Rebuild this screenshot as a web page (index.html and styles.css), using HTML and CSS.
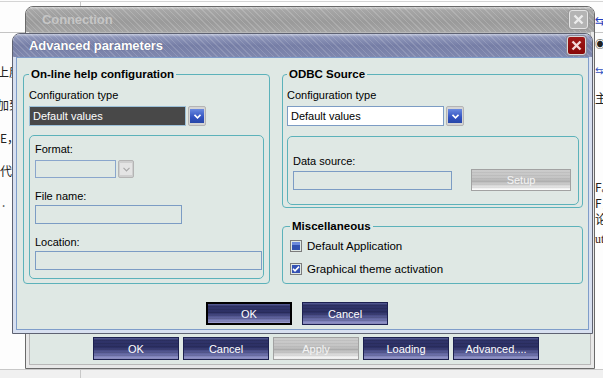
FILE: index.html
```html
<!DOCTYPE html>
<html lang="en">
<head>
  <meta charset="UTF-8">
  <title>Advanced parameters</title>
  <link rel="stylesheet" href="styles.css">
</head>
<body>

<div class="page">
  <div class="tabs"><span class="tab"></span></div>
  <div class="header">
    <span class="edge-icon">&#x21C6;</span>
  </div>
  <div class="content">
    <div class="edge left">
      <div class="line cut">上度</div>
      <div class="line cut">加到</div>
      <div class="line">E，</div>
      <div class="line">代码</div>
      <div class="line mono">. P</div>
    </div>
    <div class="edge right">
      <div class="line dot">&#x25C9;</div>
      <div class="line blue">&#x21C6;</div>
      <div class="line">主</div>
      <div class="line low">F。</div>
      <div class="line tight">F，</div>
      <div class="line tight">论</div>
      <div class="line brown">ut</div>
    </div>
  </div>
  <div class="status"><span class="status-cell"></span></div>
</div>

<!-- back window -->
<div class="win conn">
  <div class="titlebar">
    <span class="title">Connection</span>
    <span class="close">
      <svg width="11" height="11" viewBox="0 0 11 11"><path d="M1.5 1.5 L9.5 9.5 M9.5 1.5 L1.5 9.5" stroke="#ececec" stroke-width="2.4"/></svg>
    </span>
  </div>
  <div class="frame">
    <div class="win-body conn-body">
      <div class="btn-row conn-buttons">
        <button class="btn">OK</button>
        <button class="btn">Cancel</button>
        <button class="btn gray">Apply</button>
        <button class="btn">Loading</button>
        <button class="btn">Advanced....</button>
      </div>
    </div>
  </div>
</div>

<!-- front dialog -->
<div class="win adv">
  <div class="titlebar">
    <span class="title">Advanced parameters</span>
    <span class="close">
      <svg width="11" height="11" viewBox="0 0 11 11"><path d="M1.5 1.5 L9.5 9.5 M9.5 1.5 L1.5 9.5" stroke="#f4d8d8" stroke-width="2.4"/></svg>
    </span>
  </div>
  <div class="frame">
    <div class="win-body adv-body">
      <div class="columns">

        <fieldset class="group help">
          <legend>On-line help configuration</legend>
          <label class="lbl first">Configuration type</label>
          <div class="combo">
            <div class="select dark">Default values</div>
            <span class="drop"><span class="drop-in">
              <svg width="7" height="5" viewBox="0 0 7 5"><path d="M0.5 0.8 L3.5 3.8 L6.5 0.8" stroke="#fff" stroke-width="1.6" fill="none"/></svg>
            </span></span>
          </div>

          <fieldset class="group inner help-inner">
            <label class="lbl format">Format:</label>
            <div class="combo small">
              <div class="select blank"></div>
              <span class="drop off"><span class="drop-in">
                <svg width="7" height="5" viewBox="0 0 7 5"><path d="M0.5 0.8 L3.5 3.8 L6.5 0.8" stroke="#a8a8a8" stroke-width="1.2" fill="none"/></svg>
              </span></span>
            </div>
            <label class="lbl">File name:</label>
            <div class="input file"></div>
            <label class="lbl">Location:</label>
            <div class="input location"></div>
          </fieldset>
        </fieldset>

        <div class="right-col">
          <fieldset class="group odbc">
            <legend>ODBC Source</legend>
            <label class="lbl first">Configuration type</label>
            <div class="combo">
              <div class="select light">Default values</div>
              <span class="drop"><span class="drop-in">
                <svg width="7" height="5" viewBox="0 0 7 5"><path d="M0.5 0.8 L3.5 3.8 L6.5 0.8" stroke="#fff" stroke-width="1.6" fill="none"/></svg>
              </span></span>
            </div>
            <fieldset class="group inner odbc-inner">
              <label class="lbl source">Data source:</label>
              <div class="source-row">
                <div class="input source"></div>
                <button class="btn gray setup">Setup</button>
              </div>
            </fieldset>
          </fieldset>

          <fieldset class="group misc">
            <legend>Miscellaneous</legend>
            <div class="check">
              <svg width="12" height="12" viewBox="0 0 12 12">
                <rect x="0.5" y="0.5" width="11" height="11" fill="#dfe8e4" stroke="#7c7c7c"/>
                <rect x="2" y="2" width="8" height="8" fill="#3050b0"/>
                <rect x="2" y="2" width="8" height="3" fill="#6a88dc"/>
              </svg>
              <span>Default Application</span>
            </div>
            <div class="check">
              <svg width="12" height="12" viewBox="0 0 12 12">
                <rect x="0.5" y="0.5" width="11" height="11" fill="#dfe8e4" stroke="#7c7c7c"/>
                <rect x="2" y="2" width="8" height="8" fill="#3452b4"/>
                <path d="M3 5.8 L5 7.8 L9 3.6" stroke="#fff" stroke-width="1.6" fill="none"/>
              </svg>
              <span>Graphical theme activation</span>
            </div>
          </fieldset>
        </div>

      </div>
      <div class="btn-row adv-buttons">
        <button class="btn focus">OK</button>
        <button class="btn">Cancel</button>
      </div>
    </div>
  </div>
</div>

</body>
</html>
```

FILE: styles.css
```css
body {
  margin: 0;
  width: 603px;
  height: 378px;
  overflow: hidden;
  position: relative;
  font-family: "Liberation Sans", Arial, sans-serif;
  font-size: 11px;
  background: #fdfdfd;
}

/* page behind the windows */
.page {
  height: 378px;
  display: flex;
  flex-direction: column;
}

.tabs {
  height: 8px;
  border-top: 1px solid #d4d4d4;
  margin-top: 1px;
}

.tab {
  display: block;
  width: 80px;
  height: 8px;
  border-right: 1px solid #c8c8c8;
}

.header {
  height: 22px;
  border-bottom: 1px solid #c4c4c4;
  display: flex;
  justify-content: flex-end;
  align-items: center;
}

.edge-icon {
  width: 8px;
  overflow: hidden;
  color: #2040c0;
  font-size: 12px;
  font-family: "DejaVu Sans", sans-serif;
}

.content {
  flex: 1;
  display: flex;
  justify-content: space-between;
}

.edge {
  width: 12px;
  overflow: hidden;
  white-space: nowrap;
  font-family: "Noto Sans CJK SC", sans-serif;
  font-size: 12px;
  color: #222;
}

.edge.left {
  padding-top: 31px;
}

.edge.left .line {
  height: 33px;
  line-height: 16px;
}

.edge.left .cut {
  text-indent: -3px;
}

.edge.left .mono {
  font-family: "Liberation Mono", monospace;
  color: #666;
  font-size: 12px;
}

.edge.right {
  width: 8px;
  padding-top: 3px;
}

.edge.right .line {
  height: 27px;
  line-height: 16px;
}

.edge.right .dot {
  font-size: 10px;
}

.edge.right .blue {
  color: #3050c0;
  font-family: "DejaVu Sans", sans-serif;
  font-size: 10px;
}

.edge.right .low {
  margin-top: 62px;
  height: 16px;
  line-height: 16px;
}

.edge.right .tight {
  height: 16px;
  line-height: 16px;
}

.edge.right .brown {
  margin-top: 4px;
  color: #402010;
  font-family: "Liberation Serif", serif;
}

.status {
  height: 8px;
  border-top: 1px solid #c8c8c8;
  background: #f0f0f0;
}

.status-cell {
  display: block;
  width: 80px;
  height: 8px;
  border-right: 1px solid #c8c8c8;
}

/* windows */
.win {
  position: absolute;
  box-sizing: border-box;
  display: flex;
  flex-direction: column;
  border: 1px solid #5e6272;
  border-radius: 8px 8px 0 0;
  overflow: hidden;
}

.conn {
  left: 25px;
  top: 6px;
  width: 570px;
  height: 363px;
  border-color: #6a6a6a;
}

.adv {
  left: 12px;
  top: 33px;
  width: 581px;
  height: 301px;
}

.titlebar {
  height: 23px;
  display: flex;
  align-items: center;
  justify-content: space-between;
  padding: 0 6px 0 16px;
  flex-shrink: 0;
}

.conn .titlebar {
  height: 25px;
  background:
    repeating-linear-gradient(45deg, rgba(255,255,255,0.16) 0 1px, transparent 1px 4px),
    linear-gradient(#d4d4d4 0, #a6a6a6 3px, #9a9a9a 60%, #a4a4a4 100%);
}

.adv .titlebar {
  background:
    repeating-linear-gradient(45deg, rgba(255,255,255,0.14) 0 1px, transparent 1px 4px),
    linear-gradient(#c4cade 0, #8e96ba 3px, #767ea6 50%, #8088ae 100%);
}

.title {
  font-size: 13px;
  font-weight: bold;
  letter-spacing: -0.1px;
}

.conn .title {
  color: #c6c6c6;
}

.adv .title {
  color: #fff;
  text-shadow: 0 0 1px #505878;
}

.close {
  width: 19px;
  height: 19px;
  box-sizing: border-box;
  border-radius: 3px;
  display: flex;
  align-items: center;
  justify-content: center;
}

.conn .close {
  background: #b4b4b4;
  border: 1px solid #e4e4e4;
  box-shadow: 0 0 0 1px #9a9a9a;
}

.adv .close {
  background: linear-gradient(#a01818, #880808);
  border: 1px solid #d8d8d8;
  box-shadow: 0 0 0 1px #8a8a98;
}

.frame {
  flex: 1;
  display: flex;
  padding: 0 3px 3px;
}

.conn .frame {
  background: #e8e8e8;
}

.adv .frame {
  background: #d8e0f0;
}

.win-body {
  flex: 1;
  border: 1px solid #7f9dca;
  background: #dfe8e4;
}

.conn-body {
  border-color: #b8b8b8;
  display: flex;
  flex-direction: column;
  justify-content: flex-end;
  padding: 0 0 4px 63px;
}

.adv-body {
  padding: 9px 5px 0 6px;
}

.columns {
  display: flex;
  gap: 12px;
  align-items: flex-start;
}

/* group boxes */
.group {
  margin: 0;
  border: 1px solid #5cb2ba;
  border-radius: 4px;
  min-width: 0;
}

.group legend {
  padding: 0 2px;
  font-size: 11.5px;
  font-weight: bold;
  line-height: 14px;
  color: #000;
}

.help {
  width: 247px;
  box-sizing: border-box;
  padding: 0 5px 4px;
}

.right-col {
  width: 301px;
  display: flex;
  flex-direction: column;
  gap: 11px;
}

.odbc {
  padding: 0 3px 2px 4px;
}

.misc {
  padding: 1px 5px 3px 7px;
}

.inner {
  padding: 0 5px 8px;
  border-radius: 5px;
}

.help-inner {
  margin-top: 9px;
}

.odbc-inner {
  margin-top: 10px;
  padding-bottom: 13px;
}

.lbl {
  display: block;
  line-height: 13px;
  color: #000;
  margin: 12px 0 2px;
}

.lbl.first {
  margin: 8px 0 4px;
}

.lbl.format {
  margin: 7px 0 4px;
}

.lbl.source {
  margin: 18px 0 1px;
}

/* combos and inputs */
.combo {
  display: flex;
  gap: 2px;
  height: 20px;
}

.select {
  box-sizing: border-box;
  width: 157px;
  height: 20px;
  line-height: 18px;
  padding: 0 3px;
  font-size: 11px;
}

.select.dark {
  background: #484848;
  color: #fff;
  border: 1px solid #9cc0d8;
}

.select.light {
  background: #fff;
  color: #000;
  border: 1px solid #7c9cc4;
}

.drop {
  box-sizing: border-box;
  width: 18px;
  height: 20px;
  background: #d4d4d4;
  border: 1px solid #b4b4b4;
  border-radius: 2px;
  display: flex;
  align-items: center;
  justify-content: center;
}

.drop-in {
  width: 14px;
  height: 14px;
  background: linear-gradient(#6a8ae0, #3252c0 60%, #2848a8);
  display: flex;
  align-items: center;
  justify-content: center;
}

.combo.small {
  height: 18px;
}

.select.blank {
  width: 81px;
  height: 18px;
  border: 1px solid #8aa6cc;
}

.drop.off {
  width: 16px;
  height: 18px;
  background: #cfcfcf;
}

.drop.off .drop-in {
  width: 12px;
  height: 12px;
  background: #e4e4e4;
}

.input {
  box-sizing: border-box;
  height: 19px;
  border: 1px solid #7c9cc4;
}

.input.file {
  width: 147px;
}

.input.location {
  width: 227px;
}

.source-row {
  display: flex;
  align-items: center;
  gap: 19px;
}

.input.source {
  width: 159px;
}

/* checkboxes */
.check {
  display: flex;
  align-items: center;
  gap: 5px;
  height: 23px;
  font-size: 11.5px;
}

/* buttons */
.btn-row {
  display: flex;
}

.conn-buttons {
  gap: 4px;
}

.adv-buttons {
  margin-top: 18px;
  padding-left: 183px;
  gap: 10px;
}

.btn {
  box-sizing: border-box;
  width: 86px;
  height: 23px;
  padding: 0;
  border: 1px solid #1c2050;
  font-family: "Liberation Sans", Arial, sans-serif;
  font-size: 11px;
  color: #fff;
  background:
    repeating-linear-gradient(to bottom, transparent 0 2px, rgba(0,0,0,0.10) 2px 3px),
    linear-gradient(#5a6098 0, #30346a 2px, #2c3064 45%, #4a4e88 60%, #6c70aa 80%, #9ea0d4 100%);
  cursor: pointer;
}

.btn.focus {
  border: 2px solid #000;
}

.btn.gray {
  border-color: #a2a2a2;
  color: #f4f4f4;
  background:
    repeating-linear-gradient(to bottom, transparent 0 2px, rgba(0,0,0,0.05) 2px 3px),
    linear-gradient(#cccccc 0, #c4c4c4 40%, #b4b4b4 55%, #dcdcdc 80%, #ffffff 100%);
}

.btn.setup {
  width: 100px;
  height: 22px;
}
```
